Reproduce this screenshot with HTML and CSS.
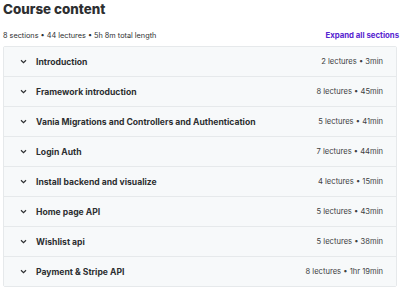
FILE: index.html
```html
<!DOCTYPE html>
<html>
<head>
    <meta charset="UTF-8">
    <title>Course content</title>
    <link rel="stylesheet" href="styles.css">
</head>
<body>
    <h2 class="page-title">Course content</h2>

    <div class="summary">
        <span>8 sections • 44 lectures • 5h 8m total length</span>
        <a class="expand-link" href="#">Expand all sections</a>
    </div>

    <div class="sections">
        <div class="section-row">
            <span class="chevron"><svg width="7" height="5" viewBox="0 0 7 5"><path d="M1 1.2 L3.5 3.6 L6 1.2" fill="none" stroke="#2d2f31" stroke-width="1.2"/></svg></span>
            <span class="section-title">Introduction</span>
            <span class="section-meta">2 lectures • 3min</span>
        </div>
        <div class="section-row">
            <span class="chevron"><svg width="7" height="5" viewBox="0 0 7 5"><path d="M1 1.2 L3.5 3.6 L6 1.2" fill="none" stroke="#2d2f31" stroke-width="1.2"/></svg></span>
            <span class="section-title">Framework introduction</span>
            <span class="section-meta">8 lectures • 45min</span>
        </div>
        <div class="section-row">
            <span class="chevron"><svg width="7" height="5" viewBox="0 0 7 5"><path d="M1 1.2 L3.5 3.6 L6 1.2" fill="none" stroke="#2d2f31" stroke-width="1.2"/></svg></span>
            <span class="section-title">Vania Migrations and Controllers and Authentication</span>
            <span class="section-meta">5 lectures • 41min</span>
        </div>
        <div class="section-row">
            <span class="chevron"><svg width="7" height="5" viewBox="0 0 7 5"><path d="M1 1.2 L3.5 3.6 L6 1.2" fill="none" stroke="#2d2f31" stroke-width="1.2"/></svg></span>
            <span class="section-title">Login Auth</span>
            <span class="section-meta">7 lectures • 44min</span>
        </div>
        <div class="section-row">
            <span class="chevron"><svg width="7" height="5" viewBox="0 0 7 5"><path d="M1 1.2 L3.5 3.6 L6 1.2" fill="none" stroke="#2d2f31" stroke-width="1.2"/></svg></span>
            <span class="section-title">Install backend and visualize</span>
            <span class="section-meta">4 lectures • 15min</span>
        </div>
        <div class="section-row">
            <span class="chevron"><svg width="7" height="5" viewBox="0 0 7 5"><path d="M1 1.2 L3.5 3.6 L6 1.2" fill="none" stroke="#2d2f31" stroke-width="1.2"/></svg></span>
            <span class="section-title">Home page API</span>
            <span class="section-meta">5 lectures • 43min</span>
        </div>
        <div class="section-row">
            <span class="chevron"><svg width="7" height="5" viewBox="0 0 7 5"><path d="M1 1.2 L3.5 3.6 L6 1.2" fill="none" stroke="#2d2f31" stroke-width="1.2"/></svg></span>
            <span class="section-title">Wishlist api</span>
            <span class="section-meta">5 lectures • 38min</span>
        </div>
        <div class="section-row">
            <span class="chevron"><svg width="7" height="5" viewBox="0 0 7 5"><path d="M1 1.2 L3.5 3.6 L6 1.2" fill="none" stroke="#2d2f31" stroke-width="1.2"/></svg></span>
            <span class="section-title">Payment &amp; Stripe API</span>
            <span class="section-meta">8 lectures • 1hr 19min</span>
        </div>
    </div>
</body>
</html>
```

FILE: styles.css
```css
body {
    font-family: 'Inter', 'Liberation Sans', sans-serif;
    margin: 0;
    padding: 0 3px;
    background: #fff;
    color: #2d2f31;
    width: 394px;
}
.page-title {
    font-size: 13.4px;
    font-weight: 800;
    margin: 0;
    padding-top: 1px;
    line-height: 16px;
}
.summary {
    display: flex;
    justify-content: space-between;
    align-items: center;
    font-size: 7.3px;
    margin-top: 12px;
    height: 12px;
    margin-bottom: 5px;
}
.expand-link {
    color: #5624d0;
    font-weight: 700;
    text-decoration: none;
    font-size: 7.8px;
    margin-right: -2px;
}
.sections {
    border: 1px solid #e6e9eb;
    border-radius: 2px;
}
.section-row {
    display: flex;
    align-items: center;
    height: 29px;
    background: #f7f9fa;
    border-bottom: 1px solid #e6e9eb;
    padding: 0 13px 0 16px;
}
.section-row:last-child {
    border-bottom: none;
}
.chevron {
    width: 16px;
    display: flex;
    align-items: center;
}
.section-title {
    flex: 1;
    font-size: 8.6px;
    font-weight: 700;
}
.section-meta {
    font-size: 7.6px;
    color: #3e4143;
}
```
